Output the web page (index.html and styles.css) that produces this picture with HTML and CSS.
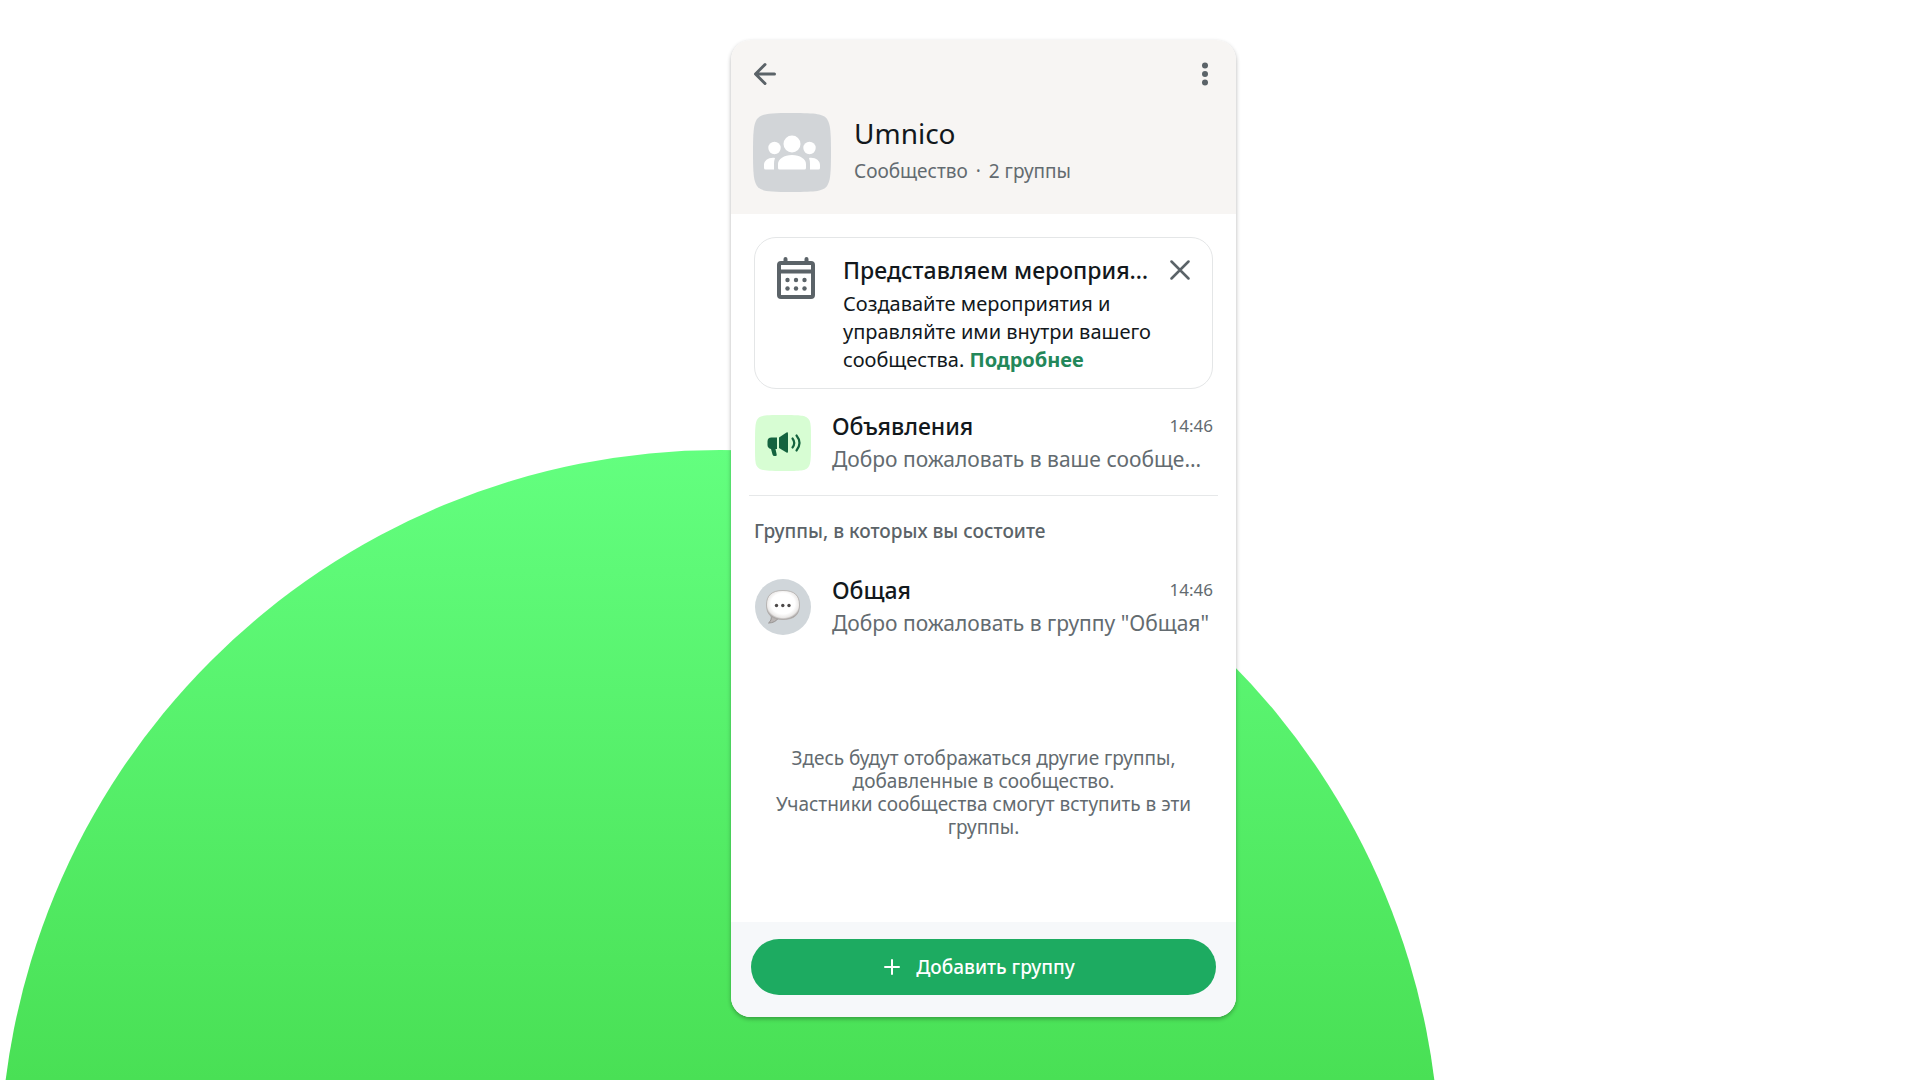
FILE: index.html
```html
<!DOCTYPE html>
<html lang="ru">
<head>
    <meta charset="UTF-8">
    <meta name="viewport" content="width=device-width, initial-scale=1.0">
    <title>Umnico - Сообщество</title>
    <link rel="stylesheet" href="styles.css">
</head>
<body>
    <div class="page">
        <div class="circle"></div>
        <main class="phone">
            <header class="header">
                <div class="toolbar">
                    <button type="button" class="icon-button" aria-label="Назад">
                        <svg width="24" height="24" viewBox="0 0 24 24" fill="none" stroke="currentColor" stroke-width="3" stroke-linecap="round" stroke-linejoin="round">
                            <path d="M21.500 12H3M12 2.500L2.500 12l9.500 9.500"/>
                        </svg>
                    </button>
                    <button type="button" class="icon-button" aria-label="Меню">
                        <svg width="16" height="24" viewBox="0 0 16 24" fill="currentColor">
                            <circle cx="8" cy="3.500" r="3"/>
                            <circle cx="8" cy="12" r="3"/>
                            <circle cx="8" cy="20.500" r="3"/>
                        </svg>
                    </button>
                </div>
                <div class="profile">
                    <svg class="profile-avatar" width="78" height="79" viewBox="0 0 78 79">
                        <path fill="#d2d5d8" d="M39 0C64 0 70 1 74 6c3 5 4 10 4 33.500s-1 28.500-4 33.500c-4 5-10 6-35 6s-31-1-35-6c-3-5-4-10-4-33.500S1 11 4 6C8 1 14 0 39 0z"/>
                        <g fill="#fff">
                            <circle cx="39" cy="31" r="8.500"/>
                            <circle cx="21.500" cy="35" r="6.200"/>
                            <circle cx="56.500" cy="35" r="6.200"/>
                            <path d="M25 55v-4c0-5 6-9 14-9s14 4 14 9v4q0 1.500-1.500 1.500h-25Q25 56.500 25 55z"/>
                            <path d="M22 45c-6-1-11 2.500-11 7v3q0 1.500 1.500 1.500h8.500v-5.500q0-3.500 1-6z"/>
                            <path d="M56 45c6-1 11 2.500 11 7v3q0 1.500-1.500 1.500H57v-5.500q0-3.500-1-6z"/>
                        </g>
                    </svg>
                    <div>
                        <h1>Umnico</h1>
                        <p class="profile-info">Сообщество <span class="dot">·</span> 2 группы</p>
                    </div>
                </div>
            </header>

            <section class="notice">
                <svg class="notice-icon" width="40" height="44" viewBox="0 0 40 44">
                    <g fill="none" stroke="#5b6368" stroke-width="4">
                        <rect x="3" y="7" width="34" height="34" rx="2"/>
                        <path d="M3 15.500h34"/>
                        <path d="M9.500 6V3M30.500 6V3" stroke-linecap="round"/>
                    </g>
                    <g fill="#5b6368">
                        <circle cx="11.500" cy="24" r="2.200"/>
                        <circle cx="20" cy="24" r="2.200"/>
                        <circle cx="28.500" cy="24" r="2.200"/>
                        <circle cx="11.500" cy="32.500" r="2.200"/>
                        <circle cx="20" cy="32.500" r="2.200"/>
                        <circle cx="28.500" cy="32.500" r="2.200"/>
                    </g>
                </svg>
                <div class="notice-body">
                    <div class="notice-top">
                        <h2>Представляем мероприя…</h2>
                        <button type="button" class="icon-button" aria-label="Закрыть">
                            <svg width="20" height="20" viewBox="0 0 20 20" fill="none" stroke="currentColor" stroke-width="2.500" stroke-linecap="round">
                                <path d="M1.500 1.500l17 17M18.500 1.500l-17 17"/>
                            </svg>
                        </button>
                    </div>
                    <p>Создавайте мероприятия и управляйте ими внутри вашего сообщества. <a href="#">Подробнее</a></p>
                </div>
            </section>

            <article class="chat">
                <svg class="chat-icon" width="56" height="56" viewBox="0 0 56 56">
                    <path fill="#d7fdd3" d="M28 0c18 0 22 .5 25 3.500S56 10 56 28s-.5 21.500-3 24.500-7 3.500-25 3.500-22-.5-25-3.500S0 46 0 28 .5 6.500 3 3.500 10 0 28 0z"/>
                    <path fill="#14633f" d="M22 22.500h-5.500a4 4 0 0 0-4 4V30q0 3 3.500 4l1.500 5.500q.5 1.500 2 1.500h1q1.500 0 1.200-1.500L20.500 34H22z"/>
                    <path fill="#14633f" d="M24 22.500l7.500-5q1.500-.7 1.500 1v18q0 1.700-1.500 1L24 33z"/>
                    <path fill="none" stroke="#14633f" stroke-width="2.200" stroke-linecap="round" d="M37.500 23.500q3.500 4.500 0 9M41.500 20.500q6 7.500 0 15"/>
                </svg>
                <div class="chat-body">
                    <div class="chat-top">
                        <h2>Объявления</h2>
                        <time>14:46</time>
                    </div>
                    <p>Добро пожаловать в ваше сообще…</p>
                </div>
            </article>

            <hr class="divider">
            <h3 class="section-title">Группы, в которых вы состоите</h3>

            <article class="chat">
                <svg class="chat-icon" width="56" height="56" viewBox="0 0 56 56">
                    <defs>
                        <radialGradient id="bubble" cx="50%" cy="45%" r="55%">
                            <stop offset="65%" stop-color="#fff"/>
                            <stop offset="88%" stop-color="#ebe9e8"/>
                            <stop offset="100%" stop-color="#aaa6a5"/>
                        </radialGradient>
                    </defs>
                    <circle cx="28" cy="28" r="28" fill="#d0d6da"/>
                    <path d="M16 36c1 4-.5 6.500-2.500 8 4.500 0 8-2 10-5z" fill="#b9b5b4" stroke="#989493"/>
                    <path d="M28 11.500c11.500 0 16.500 5 16.500 14.500S39.500 40.500 28 40.500 11.500 35.500 11.500 26 16.500 11.500 28 11.500z" fill="url(#bubble)" stroke="#aaa6a4" stroke-width=".7"/>
                    <g fill="#4c4948">
                        <circle cx="21.500" cy="26.500" r="1.700"/>
                        <circle cx="27.800" cy="26.500" r="1.700"/>
                        <circle cx="34" cy="26.500" r="1.700"/>
                    </g>
                </svg>
                <div class="chat-body">
                    <div class="chat-top">
                        <h2>Общая</h2>
                        <time>14:46</time>
                    </div>
                    <p>Добро пожаловать в группу "Общая"</p>
                </div>
            </article>

            <p class="empty">Здесь будут отображаться другие группы, добавленные в сообщество.<br>Участники сообщества смогут вступить в эти группы.</p>

            <footer class="footer">
                <button type="button" class="add-button">
                    <svg width="16" height="16" viewBox="0 0 16 16" fill="none" stroke="currentColor" stroke-width="2" stroke-linecap="round">
                        <path d="M8 1v14M1 8h14"/>
                    </svg>
                    Добавить группу
                </button>
            </footer>
        </main>
    </div>
</body>
</html>
```
FILE: styles.css
```css
* {
    box-sizing: border-box;
}
body {
    margin: 0;
    background-color: #fff;
    color: #12181c;
    font-family: "Noto Sans", "Open Sans", sans-serif;
    font-size: 19px;
}
h1, h2, h3, p {
    margin: 0;
    font-weight: 500;
}
p {
    font-weight: 400;
}
button {
    font-family: inherit;
    cursor: pointer;
}
.page {
    position: relative;
    display: flex;
    justify-content: center;
    min-height: 100vh;
    padding: 40px 0 63px 47px;
    overflow: hidden;
}
/* Green circle behind the card */
.circle {
    position: absolute;
    top: 450px;
    left: 0;
    width: 75vw;
    aspect-ratio: 1;
    border-radius: 50%;
    background: linear-gradient(#63ff7f 0, #49e055 630px);
}
.phone {
    position: relative;
    display: flex;
    flex-direction: column;
    width: 100%;
    max-width: 505px;
    border-radius: 20px;
    background-color: #fff;
    box-shadow: 0 2px 4px rgba(0, 0, 0, 0.3);
    overflow: hidden;
}

/* Header */
.header {
    padding: 22px 23px 22px 22px;
    background-color: #f7f5f3;
}
.toolbar {
    display: flex;
    justify-content: space-between;
    margin-bottom: 27px;
}
.icon-button {
    display: flex;
    padding: 0;
    border: none;
    background: none;
    color: #5b6368;
}
.profile {
    display: flex;
    gap: 23px;
}
.profile h1 {
    font-size: 28px;
    font-weight: 400;
    line-height: 40px;
}
.profile-info {
    line-height: 36px;
    color: #636b70;
}
.dot {
    margin: 0 3px;
}

/* Notice */
.notice {
    display: flex;
    gap: 27px;
    margin: 23px 23px 0;
    padding: 18px 22px 14px 21px;
    border: 1px solid #e4e6e7;
    border-radius: 22px;
}
.notice-icon,
.profile-avatar,
.chat-icon {
    flex-shrink: 0;
}
.notice-body {
    flex: 1;
    min-width: 0;
}
.notice-top {
    display: flex;
    align-items: center;
    justify-content: space-between;
    gap: 16px;
}
.notice h2 {
    font-size: 23px;
    line-height: 28px;
    white-space: nowrap;
}
.notice p {
    margin-top: 6px;
    font-size: 20px;
    line-height: 28px;
}
.notice a {
    color: #23875a;
    font-weight: 700;
    text-decoration: none;
}

/* Chats */
.chat {
    display: flex;
    align-items: center;
    gap: 21px;
    padding: 0 23px 0 24px;
}
.chat-body {
    flex: 1;
    min-width: 0;
}
.chat-top {
    display: flex;
    justify-content: space-between;
}
.chat h2 {
    font-size: 23px;
    line-height: 32px;
}
.chat time {
    font-size: 17px;
    line-height: 32px;
    color: #636b70;
}
.chat p {
    font-size: 21px;
    line-height: 34px;
    color: #636b70;
    white-space: nowrap;
}
.notice + .chat {
    margin-top: 21px;
}
.divider {
    width: auto;
    margin: 19px 18px 0;
    border: none;
    border-top: 1px solid #e6e8e9;
}
.section-title {
    margin: 20px 23px 28px;
    font-size: 19px;
    line-height: 30px;
    color: #5b6368;
}

.empty {
    margin: 107px 30px 60px;
    line-height: 23px;
    color: #636b70;
    text-align: center;
}

/* Footer */
.footer {
    margin-top: auto;
    padding: 17px 20px 22px;
    background-color: #f6f8fa;
}
.add-button {
    display: flex;
    align-items: center;
    justify-content: center;
    gap: 16px;
    width: 100%;
    height: 56px;
    padding: 0 8px 0 0;
    border: none;
    border-radius: 28px;
    background-color: #1dab61;
    color: #fff;
    font-size: 19px;
    font-weight: 500;
}
```
